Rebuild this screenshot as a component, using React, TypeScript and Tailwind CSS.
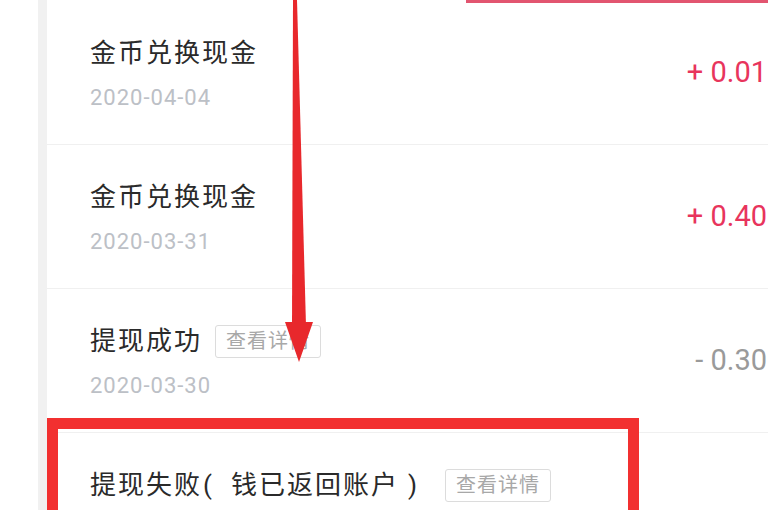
const rows = [
  { title: "金币兑换现金", date: "2020-04-04", amount: "+ 0.01", income: true },
  { title: "金币兑换现金", date: "2020-03-31", amount: "+ 0.40", income: true },
  { title: "提现成功", date: "2020-03-30", amount: "- 0.30", income: false, detail: true },
  { title: "提现失败", note: "钱已返回账户", date: "2020-03-29", amount: "", income: false, detail: true },
];

function DetailTag() {
  return (
    <span className="ml-[13px] inline-flex h-[33px] items-center rounded-[3px] border border-[#dcdcdc] px-[10px] text-[20px] tracking-[1px] text-[#a8a8a8]">
      查看详情
    </span>
  );
}

export default function App() {
  return (
    <div
      className="relative h-[510px] w-[768px] overflow-hidden bg-white"
      style={{ fontFamily: 'Roboto, "Noto Sans CJK SC", sans-serif' }}
    >
      <div className="flex h-full">
        <div className="w-[38px] shrink-0 bg-white" />
        <div className="w-[9px] shrink-0 bg-[#f1f1f1]" />
        {/* record list */}
        <div className="w-[740px] shrink-0 pt-px">
          {rows.map((r, i) => (
            <div
              key={i}
              className="flex h-[144px] items-center justify-between border-b border-[#f0f0f0] pl-[43px] pr-[20px]"
            >
              <div className="mt-[3px] flex flex-col">
                <div className="flex h-[36px] items-center text-[26px] tracking-[2px] text-[#2a2a2a]">
                  <span className="whitespace-nowrap">
                    {r.title}
                    {r.note && (
                      <>
                        <span className="ml-[1px] mr-[17px]">(</span>
                        {r.note}
                        <span className="ml-[9px] mr-[13px]">)</span>
                      </>
                    )}
                  </span>
                  {r.detail && <DetailTag />}
                </div>
                <div className="mt-[12px] h-[30px] text-[22px] leading-[30px] tracking-[1px] text-[#bcc0c6]">
                  {r.date}
                </div>
              </div>
              <div
                className={
                  r.income
                    ? "whitespace-nowrap text-[29px] text-[#e8345c]"
                    : "whitespace-nowrap text-[29px] text-[#9a9a9a]"
                }
              >
                {r.amount}
              </div>
            </div>
          ))}
        </div>
      </div>

      {/* annotation: top box edge */}
      <div className="absolute left-[466px] top-0 h-[3px] w-[310px] bg-[#e25570]" />

      {/* annotation: arrow */}
      <svg className="absolute left-0 top-0" width="768" height="510" viewBox="0 0 768 510">
        <polygon points="293,0 297,0 306,326 292,326" fill="#e8282c" />
        <polygon points="285,322 313,322 299,362" fill="#e8282c" />
      </svg>

      {/* annotation: highlight box */}
      <div className="absolute left-[47px] top-[418px] h-[120px] w-[592px] border-[11px] border-[#f23030]" />
    </div>
  );
}
